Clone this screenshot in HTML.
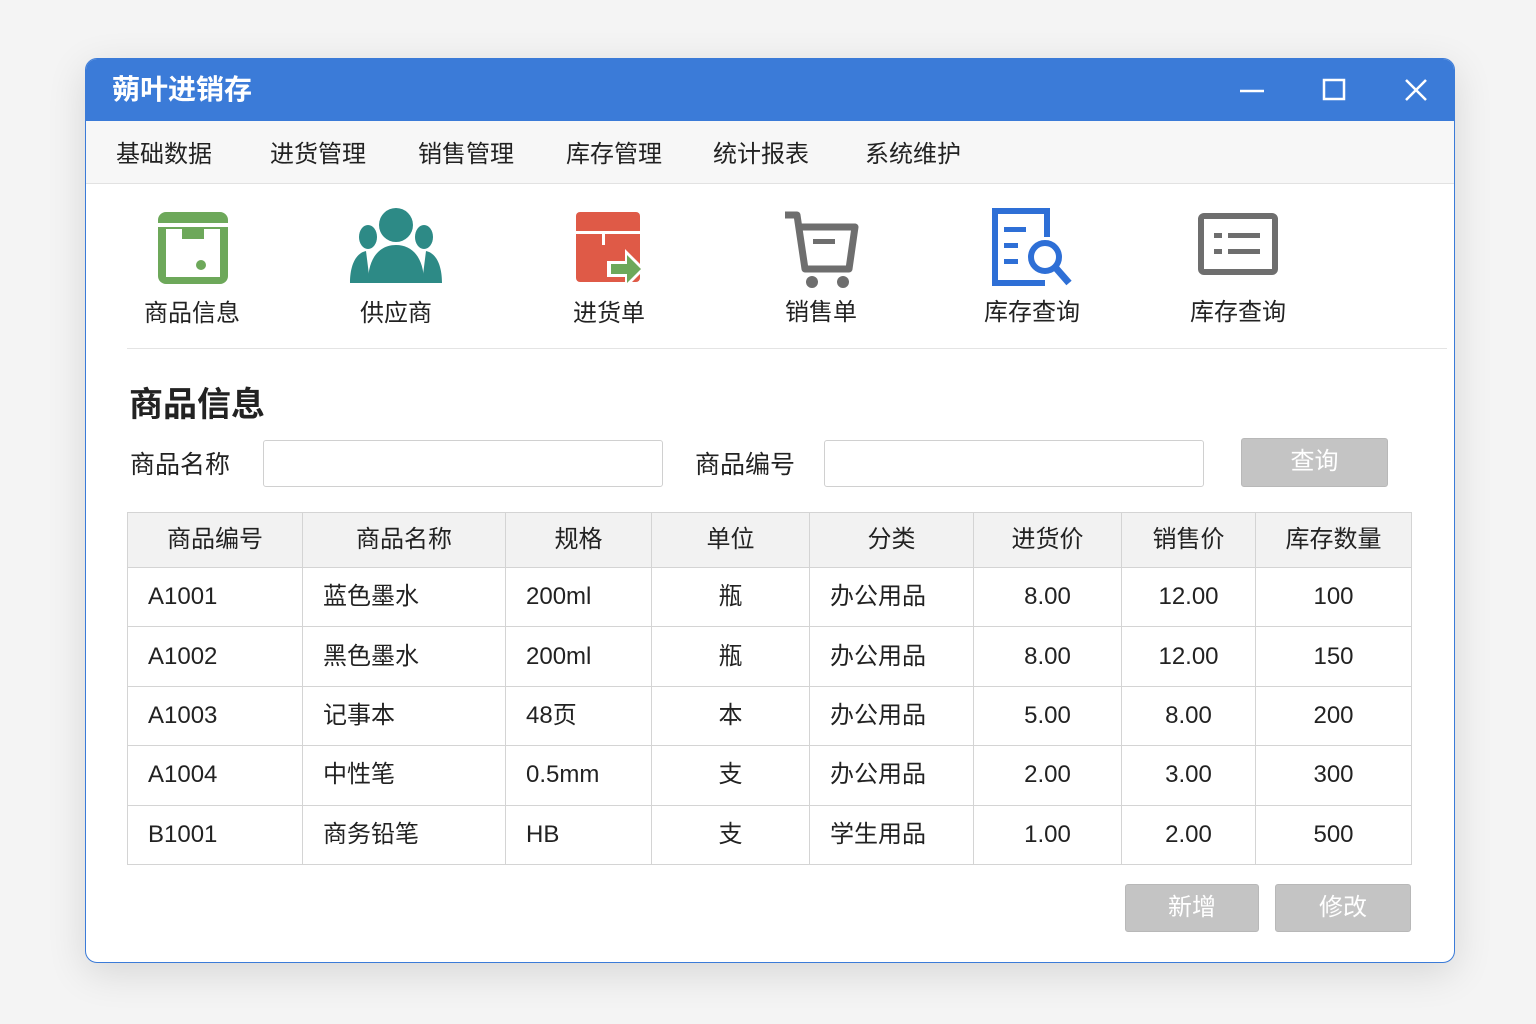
<!DOCTYPE html>
<html><head><meta charset="utf-8"><style>
*{margin:0;padding:0;box-sizing:border-box}
body{width:1536px;height:1024px;background:#f4f4f4;font-family:"Liberation Sans","Noto Sans CJK SC",sans-serif;color:#222;position:relative;overflow:hidden}
.win{position:absolute;left:85px;top:58px;width:1370px;height:905px;background:#fff;border:1.5px solid #3b7bd8;border-radius:12px;overflow:hidden;box-shadow:0 10px 40px rgba(0,0,0,.12)}
.title{height:62px;background:#3b7bd8;color:#fff;font-size:28px;font-weight:bold;padding-left:26px;line-height:62px;position:relative}
.menu{height:63px;background:#f7f7f7;border-bottom:1px solid #e2e2e2;position:relative;font-size:24px}
.menu span{position:absolute;top:13px}
.ic{position:absolute;text-align:center;font-size:24px;width:160px}
.ic svg{display:block;margin:0 auto}
.abs{position:absolute}
input{position:absolute;border:1px solid #d0d0d0;border-radius:3px;background:#fff;height:47px}
.btn{position:absolute;background:#c4c4c4;border:1px solid #b8b8b8;border-radius:3px;color:#fff;font-size:24px;text-align:center;line-height:46px}
table{position:absolute;left:41px;top:453px;border-collapse:collapse;font-size:24px}
td,th{border:1px solid #d4d4d4;height:59.4px;font-weight:normal;vertical-align:middle;line-height:30px}
th{background:#f2f2f2;height:55px;text-align:center}
td.l{padding-left:20px}
td.c{text-align:center}
</style></head><body>
<div class="win">
<div class="title">蒴叶进销存
<svg class="abs" style="left:1154px;top:20px" width="24" height="24"><line x1="0" y1="12" x2="24" y2="12" stroke="#fff" stroke-width="2.5"/></svg>
<svg class="abs" style="left:1236px;top:19px" width="24" height="24"><rect x="2" y="2" width="20" height="19" fill="none" stroke="#fff" stroke-width="2.5"/></svg>
<svg class="abs" style="left:1318px;top:19px" width="24" height="24"><path d="M2 2L22 22M22 2L2 22" stroke="#fff" stroke-width="2.5"/></svg>
</div>
<div class="menu">
<span style="left:30px">基础数据</span><span style="left:184px">进货管理</span><span style="left:332px">销售管理</span><span style="left:480px">库存管理</span><span style="left:627px">统计报表</span><span style="left:779px">系统维护</span>
</div>
<div class="ic" style="left:26px;top:150px"><svg width="80" height="80" viewBox="0 0 80 80"><rect x="6" y="3" width="70" height="72" rx="8" fill="#6da85a"/><rect x="14" y="20" width="54" height="48" fill="#fff"/><rect x="30" y="20" width="22" height="10" fill="#6da85a"/><circle cx="49" cy="56" r="5" fill="#6da85a"/><rect x="6" y="14" width="70" height="4" fill="#fff"/></svg><div style="margin-top:4px">商品信息</div></div>
<div class="ic" style="left:230px;top:148px"><svg width="96" height="80" viewBox="0 0 96 80"><circle cx="48" cy="18" r="17" fill="#2d8a86"/><ellipse cx="20" cy="30" rx="9" ry="12" fill="#2d8a86"/><ellipse cx="76" cy="30" rx="9" ry="12" fill="#2d8a86"/><path d="M20 76C20 50 32 38 48 38C64 38 76 50 76 76Z" fill="#2d8a86"/><path d="M2 76C2 58 8 46 18 44L22 76Z M94 76C94 58 88 46 78 44L74 76Z" fill="#2d8a86"/></svg><div style="margin-top:6px">供应商</div></div>
<div class="ic" style="left:443px;top:150px"><svg width="80" height="80" viewBox="0 0 80 80"><rect x="7" y="3" width="64" height="70" rx="4" fill="#df5a47"/><rect x="7" y="22" width="64" height="3" fill="#fff"/><rect x="33" y="22" width="3" height="14" fill="#fff"/><path d="M38 52H56V40L76 60L56 80V68H38Z" fill="#fff"/><path d="M42 55H58V46L72 60L58 74V65H42Z" fill="#6da85a"/></svg><div style="margin-top:4px">进货单</div></div>
<div class="ic" style="left:655px;top:150px"><svg width="84" height="80" viewBox="0 0 84 80"><path d="M6 6H18L26 60H70L76 18H22" fill="none" stroke="#6e6e6e" stroke-width="7" stroke-linejoin="round"/><rect x="34" y="30" width="22" height="5" fill="#6e6e6e"/><circle cx="33" cy="73" r="6" fill="#6e6e6e"/><circle cx="64" cy="73" r="6" fill="#6e6e6e"/></svg><div style="margin-top:3px">销售单</div></div>
<div class="ic" style="left:866px;top:148px"><svg width="90" height="82" viewBox="0 0 90 82"><path d="M58 76H8V4H60V30" fill="none" stroke="#2e6fd6" stroke-width="6"/><rect x="17" y="20" width="22" height="5" fill="#2e6fd6"/><rect x="17" y="36" width="14" height="5" fill="#2e6fd6"/><rect x="17" y="52" width="14" height="5" fill="#2e6fd6"/><circle cx="58" cy="50" r="14" fill="none" stroke="#2e6fd6" stroke-width="6"/><path d="M68 60L82 76" stroke="#2e6fd6" stroke-width="7"/></svg><div style="margin-top:3px">库存查询</div></div>
<div class="ic" style="left:1072px;top:150px"><svg width="84" height="80" viewBox="0 0 84 80"><rect x="5" y="7" width="74" height="56" rx="3" fill="none" stroke="#6e6e6e" stroke-width="6"/><rect x="18" y="24" width="8" height="5" fill="#6e6e6e"/><rect x="32" y="24" width="32" height="5" fill="#6e6e6e"/><rect x="18" y="40" width="8" height="5" fill="#6e6e6e"/><rect x="32" y="40" width="32" height="5" fill="#6e6e6e"/></svg><div style="margin-top:3px">库存查询</div></div>
<div class="abs" style="left:41px;top:289px;width:1320px;height:1px;background:#e4e4e4"></div>
<div class="abs" style="left:43px;top:318px;font-size:34px;font-weight:bold">商品信息</div>
<div class="abs" style="left:44px;top:386px;font-size:25px">商品名称</div>
<input style="left:177px;top:381px;width:400px">
<div class="abs" style="left:609px;top:386px;font-size:25px">商品编号</div>
<input style="left:738px;top:381px;width:380px">
<div class="btn" style="left:1155px;top:379px;width:147px;height:49px">查询</div>
<table>
<tr><th style="width:175px">商品编号</th><th style="width:203px">商品名称</th><th style="width:146px">规格</th><th style="width:158px">单位</th><th style="width:164px">分类</th><th style="width:148px">进货价</th><th style="width:134px">销售价</th><th style="width:156px">库存数量</th></tr>
<tr><td class="l">A1001</td><td class="l">蓝色墨水</td><td class="l">200ml</td><td class="c">瓶</td><td class="l">办公用品</td><td class="c">8.00</td><td class="c">12.00</td><td class="c">100</td></tr>
<tr><td class="l">A1002</td><td class="l">黑色墨水</td><td class="l">200ml</td><td class="c">瓶</td><td class="l">办公用品</td><td class="c">8.00</td><td class="c">12.00</td><td class="c">150</td></tr>
<tr><td class="l">A1003</td><td class="l">记事本</td><td class="l">48页</td><td class="c">本</td><td class="l">办公用品</td><td class="c">5.00</td><td class="c">8.00</td><td class="c">200</td></tr>
<tr><td class="l">A1004</td><td class="l">中性笔</td><td class="l">0.5mm</td><td class="c">支</td><td class="l">办公用品</td><td class="c">2.00</td><td class="c">3.00</td><td class="c">300</td></tr>
<tr><td class="l">B1001</td><td class="l">商务铅笔</td><td class="l">HB</td><td class="c">支</td><td class="l">学生用品</td><td class="c">1.00</td><td class="c">2.00</td><td class="c">500</td></tr>
</table>
<div class="btn" style="left:1039px;top:825px;width:134px;height:48px">新增</div>
<div class="btn" style="left:1189px;top:825px;width:136px;height:48px">修改</div>
</div>
</body></html>
